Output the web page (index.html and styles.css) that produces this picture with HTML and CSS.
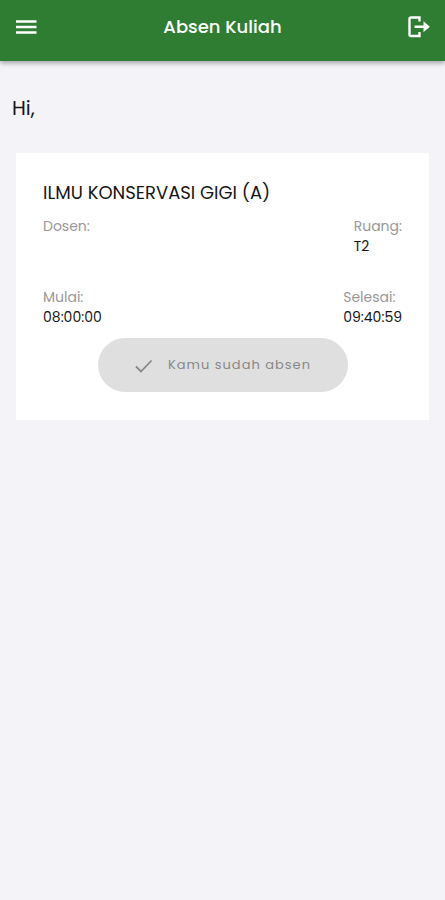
FILE: index.html
```html
<!DOCTYPE html>
<html lang="id">
<head>
<meta charset="utf-8">
<meta name="viewport" content="width=device-width, initial-scale=1">
<title>Absen Kuliah</title>
<link rel="stylesheet" href="styles.css">
</head>
<body>
<header class="bar">
  <button class="icon-button" type="button" aria-label="Menu">
    <svg width="24" height="24" viewBox="0 0 24 24"><path d="M2 6.500h20.500M2 12h20.500M2 17.500h20.500" fill="none" stroke="currentColor" stroke-width="2.600"/></svg>
  </button>
  <h1 class="title">Absen Kuliah</h1>
  <button class="icon-button" type="button" aria-label="Keluar">
    <svg width="24" height="24" viewBox="0 0 24 24"><path d="M12.500 6.500V2.500H4a1.500 1.500 0 0 0-1.500 1.500v15.500a1.500 1.500 0 0 0 1.500 1.500H12.500v-4M7.500 11.700h11" fill="none" stroke="currentColor" stroke-width="2.400"/><path d="M16.500 6.200l6.300 5.500-6.300 5.500z" fill="currentColor"/></svg>
  </button>
</header>
<main>
  <p class="greeting">Hi,</p>
  <section class="card">
    <h2 class="course">ILMU KONSERVASI GIGI (A)</h2>
    <dl class="details">
      <div class="row">
        <div><dt>Dosen:</dt><dd></dd></div>
        <div><dt>Ruang:</dt><dd>T2</dd></div>
      </div>
      <div class="row">
        <div><dt>Mulai:</dt><dd>08:00:00</dd></div>
        <div><dt>Selesai:</dt><dd>09:40:59</dd></div>
      </div>
    </dl>
    <button class="status" type="button" disabled>
      <svg width="20" height="20" viewBox="0 0 20 20"><path d="M2 11.500l5 5L17.500 5.500" fill="none" stroke="currentColor" stroke-width="1.800"/></svg>
      <span>Kamu sudah absen</span>
    </button>
  </section>
</main>
</body>
</html>
```
FILE: styles.css
```css
* { box-sizing: border-box; }
body, h1, h2, p, dl, dd { margin: 0; }
body {
  min-height: 100vh;
  background: #f3f3f8;
  color: #161616;
  font-family: Poppins, Inter, "Open Sans", sans-serif;
}
.bar {
  display: flex;
  align-items: center;
  justify-content: space-between;
  height: 61px;
  padding: 0 14px 8px;
  background: #2e7d32;
  color: #fff;
  box-shadow: 0 2px 5px rgb(0 0 0 / 35%);
}
.icon-button {
  display: flex;
  padding: 0;
  border: 0;
  background: none;
  color: inherit;
}
.title { font-size: 18px; font-weight: 500; line-height: 24px; }
.greeting { padding: 33px 12px 0; font-size: 20px; line-height: 28px; }
.card {
  margin: 31px 16px 0;
  padding: 28px 27px;
  background: #fff;
}
.course { font-size: 18px; font-weight: 400; line-height: 24px; }
.details { padding-top: 11px; font-size: 14px; line-height: 20px; }
.row { display: flex; justify-content: space-between; }
.row + .row { padding: 31px 0 11px; }
dt { color: #999; }
.status {
  display: flex;
  align-items: center;
  justify-content: center;
  gap: 14px;
  width: 250px;
  height: 54px;
  margin: 0 auto;
  border: 0;
  border-radius: 27px;
  background: #dfdfdf;
  color: #888;
  font: 400 13px/20px Poppins, Inter, sans-serif;
  letter-spacing: 1px;
}
```
